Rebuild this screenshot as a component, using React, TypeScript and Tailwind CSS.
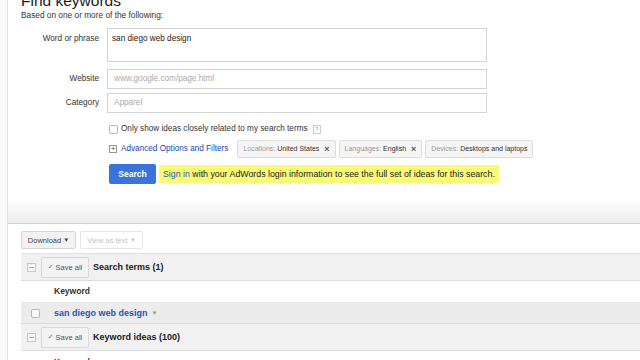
import React from "react";

const F = { fontFamily: '"Liberation Sans", Arial, sans-serif' };

function Chip({ k, v, x }: { k: string; v: string; x?: boolean }) {
  return (
    <div className="h-[18px] flex items-center px-[5px] border border-[#dcdcdc] bg-[#f5f5f5] rounded-[2px] text-[7px] whitespace-nowrap">
      <span className="text-[#999]">{k}:&nbsp;</span>
      <span className="text-[#333]">{v}</span>
      {x && <span className="ml-[5px] text-[#555] text-[9px] font-bold leading-none">×</span>}
    </div>
  );
}

function SaveAll() {
  return (
    <div className="h-[21px] w-[48px] flex items-center justify-center border border-[#d9d9d9] bg-[#f3f3f3] rounded-[2px] text-[7.5px] text-[#555]">
      <span className="mr-[2px] text-[#777] font-['DejaVu_Sans',sans-serif] text-[7px]">✓</span>Save all
    </div>
  );
}

function MinusBox() {
  return (
    <div className="w-[9px] h-[9px] border border-[#c8c8c8] bg-[#f7f7f7] flex items-center justify-center">
      <div className="w-[5px] h-px bg-[#aaa]" />
    </div>
  );
}

export default function App() {
  return (
    <div style={F} className="w-[640px] h-[360px] overflow-hidden bg-white flex text-[#222]">
      <div className="w-[8px] shrink-0 border-r border-[#e2e2e2] bg-[#fafafa]" />
      <div className="flex-1 min-w-0">
        <div className="pl-[13px] -mt-[8px]">
          <div className="text-[15.5px] leading-[18px] text-[#222]">Find keywords</div>
          <div className="text-[8.3px] leading-[11px] mt-[0px] text-[#333]">Based on one or more of the following:</div>
        </div>
        <div className="mt-[7px] grid grid-cols-[91px_380px] gap-x-[8px] text-[8.2px]">
          <div className="text-right pt-[5px] text-[#333]">Word or phrase</div>
          <div className="h-[34px] border border-[#d4d4d4] px-[4px] pt-[4px] text-[#222]">san diego web design</div>
          <div className="text-right mt-[7px] h-[20px] flex items-center justify-end text-[#333]">Website</div>
          <div className="mt-[7px] h-[20px] border border-[#d4d4d4] px-[6px] flex items-center text-[#aaa]">www.google.com/page.html</div>
          <div className="text-right mt-[4px] h-[20px] flex items-center justify-end text-[#333]">Category</div>
          <div className="mt-[4px] h-[20px] border border-[#d4d4d4] px-[6px] flex items-center text-[#aaa]">Apparel</div>
        </div>
        <div className="ml-[101px] mt-[10px] flex items-center text-[8.2px] text-[#333]">
          <div className="w-[9px] h-[9px] border border-[#b5b5b5] rounded-[2px] bg-white mr-[3px]" />
          <span>Only show ideas closely related to my search terms</span>
          <span className="ml-[5px] w-[8px] h-[9px] border border-[#ccc] text-[6px] text-[#999] flex items-center justify-center">?</span>
        </div>
        <div className="ml-[101px] mt-[5px] flex items-center text-[8.2px]">
          <div className="w-[8px] h-[8px] border border-[#999] flex items-center justify-center text-[8px] leading-none text-[#555] mr-[4px]">+</div>
          <span className="text-[#1a46b0]">Advanced Options and Filters</span>
          <div className="ml-[9px] flex gap-[3px]">
            <Chip k="Locations" v="United States" x />
            <Chip k="Languages" v="English" x />
            <Chip k="Devices" v="Desktops and laptops" />
          </div>
        </div>
        <div className="ml-[101px] mt-[6px] flex items-center text-[8.5px]">
          <div className="w-[47px] h-[20px] rounded-[2px] bg-[#3b73dd] text-white font-bold flex items-center justify-center">Search</div>
          <div className="ml-[3px] h-[18px] bg-[#fafa77] px-[4px] flex items-center text-[#222] text-[8.8px]">
            <span className="text-[#2a55b5]">Sign in</span>&nbsp;with your AdWords login information to see the full set of ideas for this search.
          </div>
        </div>
        <div className="mt-[14px] h-[26px] bg-gradient-to-b from-white to-[#ececec] border-b border-[#d5d5d5]" />
        <div className="pl-[13px]">
          <div className="mt-[7px] flex gap-[4px] text-[7.5px]">
            <div className="h-[18px] w-[55px] border border-[#d6d6d6] bg-[#f2f2f2] rounded-[2px] flex items-center justify-center text-[#444]">Download&nbsp;<span className="text-[6px]">▼</span></div>
            <div className="h-[18px] w-[63px] border border-[#e6e6e6] bg-white rounded-[2px] flex items-center justify-center text-[#c4c4c4]">View as text&nbsp;<span className="text-[6px]">▼</span></div>
          </div>
          <div className="mt-[4px] h-[28px] bg-[#f1f1f1] border-t border-[#e2e2e2] border-b border-b-[#dedede] flex items-center">
            <div className="ml-[6px]"><MinusBox /></div>
            <div className="ml-[5px]"><SaveAll /></div>
            <span className="ml-[4px] text-[9px] font-bold text-[#222]">Search terms (1)</span>
          </div>
          <div className="h-[22px] bg-white border-b border-[#e6e6e6] flex items-center">
            <span className="ml-[33px] text-[8.5px] font-bold text-[#333]">Keyword</span>
          </div>
          <div className="h-[21px] bg-[#ececec] border-b border-[#dcdcdc] flex items-center">
            <div className="ml-[10px] w-[9px] h-[9px] border border-[#b5b5b5] rounded-[2px] bg-white" />
            <span className="ml-[14px] text-[9px] font-bold text-[#2a55b5]">san diego web design</span>
            <span className="ml-[4px] text-[6px] text-[#999]">▼</span>
          </div>
          <div className="h-[27px] bg-[#f1f1f1] border-b border-[#dedede] flex items-center">
            <div className="ml-[6px]"><MinusBox /></div>
            <div className="ml-[5px]"><SaveAll /></div>
            <span className="ml-[4px] text-[9px] font-bold text-[#222]">Keyword ideas (100)</span>
          </div>
          <div className="h-[22px] bg-white flex items-start">
            <span className="ml-[33px] mt-[5px] text-[8.5px] font-bold text-[#333]">Keyword</span>
          </div>
        </div>
      </div>
    </div>
  );
}
